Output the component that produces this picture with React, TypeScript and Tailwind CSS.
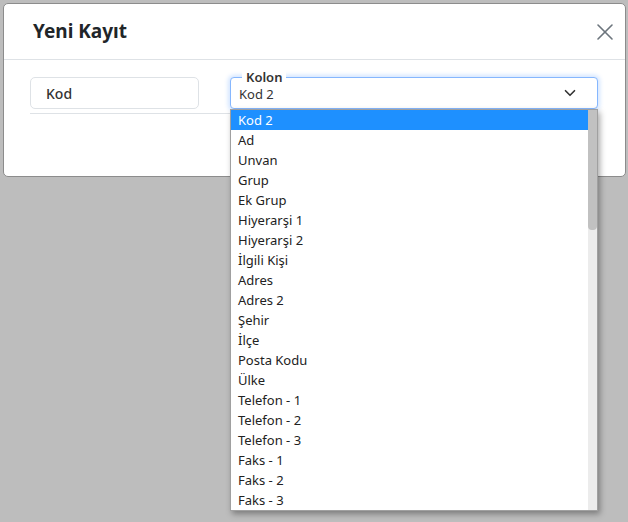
import { ChevronDown, X } from "lucide-react";

const columns = [
  "Kod 2",
  "Ad",
  "Unvan",
  "Grup",
  "Ek Grup",
  "Hiyerarşi 1",
  "Hiyerarşi 2",
  "İlgili Kişi",
  "Adres",
  "Adres 2",
  "Şehir",
  "İlçe",
  "Posta Kodu",
  "Ülke",
  "Telefon - 1",
  "Telefon - 2",
  "Telefon - 3",
  "Faks - 1",
  "Faks - 2",
  "Faks - 3",
];

function ColumnSelect({ value = "Kod 2" }: { value?: string }) {
  return (
    <div className="relative w-[368px]">
      <div className="relative flex h-[32px] items-center rounded-[4px] border border-[#86b7fe] bg-white pl-[8px] pr-[18px] shadow-[0_0_4px_2px_rgba(13,110,253,0.18)]">
        <span className="absolute -top-[8px] left-[11px] bg-white px-[4px] text-[13px] font-semibold leading-[14px] text-[#333]">
          Kolon
        </span>
        <span className="mt-[4px] flex-1 text-[13px] text-[#333]">{value}</span>
        <ChevronDown className="text-[#333]" size={18} strokeWidth={2.2} />
      </div>
      <div className="absolute left-0 top-[32px] flex h-[402px] w-[368px] border border-[#a0a0a0] bg-white shadow-[2px_3px_6px_rgba(0,0,0,0.35)]">
        <ul className="flex-1">
          {columns.map((c) => (
            <li
              className={
                c === value
                  ? "h-[20px] bg-[#1e90ff] pl-[7px] text-[13px] leading-[20px] text-white"
                  : "h-[20px] pl-[7px] text-[13px] leading-[20px] text-[#222]"
              }
              key={c}
            >
              {c}
            </li>
          ))}
        </ul>
        <div className="w-[9px] bg-[#ececec] pb-[2px]">
          <div className="h-[120px] rounded-b-[4px] bg-[#c1c1c1]" />
        </div>
      </div>
    </div>
  );
}

export default function App() {
  return (
    <div className="h-[522px] w-[628px] overflow-hidden bg-[#bdbdbd] pl-[3px] pr-[2px] pt-[3px] font-['Noto_Sans',sans-serif]">
      <div className="h-[174px] rounded-[5px] border border-[#8c8c8c] bg-white">
        <div className="flex h-[56px] items-center justify-between border-b border-[#dee2e6] pl-[29px] pr-[6px]">
          <h5 className="text-[19px] font-bold text-[#212529]">Yeni Kayıt</h5>
          <X className="text-[#6c757d]" size={28} strokeWidth={1.4} />
        </div>
        <div className="flex pl-[26px] pt-[17px]">
          <div className="w-[200px] border-b border-[#dee2e6] pb-[4px]">
            <div className="flex h-[32px] w-[169px] items-center rounded-[5px] border border-[#dee2e6] pl-[15px] text-[14px] font-medium text-[#333]">
              Kod
            </div>
          </div>
          <ColumnSelect />
        </div>
      </div>
    </div>
  );
}
